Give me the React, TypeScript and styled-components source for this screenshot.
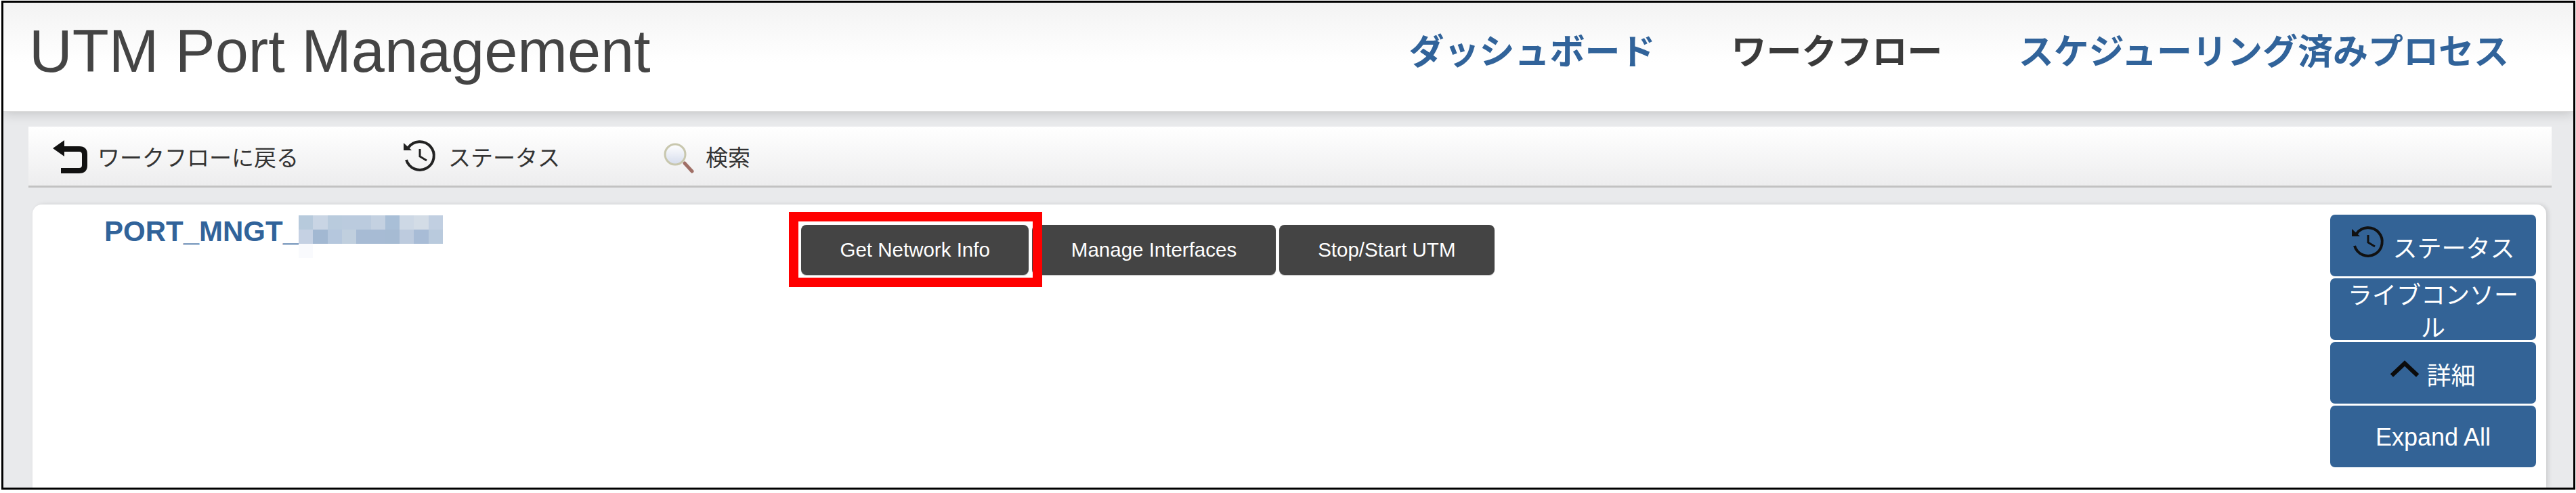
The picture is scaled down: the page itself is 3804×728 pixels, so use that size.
import styled, { createGlobalStyle } from "styled-components";

const FONT = `"Liberation Sans", "Noto Sans CJK JP", sans-serif`;
const BLUE = "#31639a";

const mosaicRows = [
    ["#b7cadc", "#c9d5e4", "#b9cbdd", "#bbcbde", "#bbcbde", "#c4d1e1", "#a9bfd7", "#cdd8e5", "#d3dce6", "#c1cfe1"],
    ["#c5d1e3", "#a2b8d2", "#b5c7dd", "#c0cfde", "#a7bbd4", "#a7bbd4", "#a6bbd3", "#bdcbde", "#a8bcd6", "#b9cadd"],
    ["#f9fafd"],
];

const GlobalStyle = createGlobalStyle`
    html, body {
        margin: 0;
        padding: 0;
        background: #fff;
        font-family: ${FONT};
    }
`;

const BackIcon = () => (
    <IconSvg viewBox="3 0 52 55" $width={52} $height={55}>
        <path d="M3 16 L20 4 V28 Z" fill="#111" />
        <path d="M16 17 H42 Q50 17 50 25 V41 Q50 49 42 49 H15" fill="none" stroke="#111" strokeWidth="8" />
    </IconSvg>
);

const HistoryIcon = ({ color = "#222" }: { color?: string }) => (
    <IconSvg viewBox="0 0 50 50" $width={50} $height={50}>
        <path d="M1 5 V16 H13 Z" fill={color} />
        <path d="M8 12 A20.8 20.8 0 1 1 5 30" fill="none" stroke={color} strokeWidth="4" />
        <path d="M25 14 V25 L35 31" fill="none" stroke={color} strokeWidth="3" />
    </IconSvg>
);

const SearchIcon = () => (
    <IconSvg viewBox="0 0 50 50" $width={50} $height={50}>
        <defs>
            <linearGradient id="glass" x1="0" y1="0" x2="0" y2="1">
                <stop offset="0" stopColor="#ffffff" />
                <stop offset="1" stopColor="#d5dcec" />
            </linearGradient>
        </defs>
        <path d="M36 35 L47 47" stroke="#a06f66" strokeWidth="5" strokeLinecap="round" />
        <circle cx="22" cy="22" r="15" fill="url(#glass)" stroke="#c8c7ae" strokeWidth="3" />
    </IconSvg>
);

const ChevronIcon = () => (
    <ChevronSvg viewBox="0 0 44 26">
        <path d="M2 23 L22 4 L42 23" fill="none" stroke="#0b0b0b" strokeWidth="6.5" />
    </ChevronSvg>
);

const App = () => {
    return (
        <>
            <GlobalStyle />
            <Frame>
                <Header>
                    <Title>UTM Port Management</Title>
                    <Nav>
                        <NavLink>ダッシュボード</NavLink>
                        <NavLink $active>ワークフロー</NavLink>
                        <NavLink>スケジューリング済みプロセス</NavLink>
                    </Nav>
                </Header>

                <Toolbar>
                    <ToolItem $width={517} $gap={14}>
                        <BackIcon />
                        <span>ワークフローに戻る</span>
                    </ToolItem>
                    <ToolItem $width={380}>
                        <HistoryIcon />
                        <span>ステータス</span>
                    </ToolItem>
                    <ToolItem>
                        <SearchIcon />
                        <span>検索</span>
                    </ToolItem>
                </Toolbar>

                <Panel>
                    <ProcessName>
                        <ProcessText>PORT_MNGT_</ProcessText>
                        <Mosaic>
                            {mosaicRows.flat().map((color, i) => (
                                <MosaicCell key={i} $color={color} />
                            ))}
                        </Mosaic>
                    </ProcessName>

                    <Actions>
                        <Highlighted>
                            <ActionButton>Get Network Info</ActionButton>
                            <RedBox />
                        </Highlighted>
                        <ActionButton>Manage Interfaces</ActionButton>
                        <ActionButton>Stop/Start UTM</ActionButton>
                    </Actions>

                    <SideColumn>
                        <SideButton>
                            <RaisedIcon>
                                <HistoryIcon color="#111" />
                            </RaisedIcon>
                            <LoweredText>ステータス</LoweredText>
                        </SideButton>
                        <SideButton $wrap>ライブコンソール</SideButton>
                        <SideButton>
                            <ChevronIcon />
                            <LoweredText>詳細</LoweredText>
                        </SideButton>
                        <SideButton>
                            <LoweredText $small>Expand All</LoweredText>
                        </SideButton>
                    </SideColumn>
                </Panel>
            </Frame>
        </>
    );
};

const Frame = styled.div`
    box-sizing: border-box;
    width: 3801px;
    height: 722px;
    margin: 1px 1px 5px 2px;
    border: 3px solid #000;
    background: #e9eaec;
    display: flex;
    flex-direction: column;
    overflow: hidden;
`;

const Header = styled.header`
    position: relative;
    z-index: 1;
    box-sizing: border-box;
    flex: 0 0 161px;
    display: flex;
    justify-content: space-between;
    align-items: flex-start;
    padding: 22px 95px 0 38px;
    background: linear-gradient(to bottom, #f3f3f3, #ffffff 55%);
    border-bottom: 1px solid #dcdcdc;
    box-shadow: 0 3px 16px rgba(0, 0, 0, 0.16);
`;

const Title = styled.h1`
    margin: 0;
    font-size: 88.3px;
    line-height: 100px;
    font-weight: 400;
    color: #444;
`;

const Nav = styled.nav`
    display: flex;
    gap: 112px;
    padding-top: 16px;
`;

const NavLink = styled.a<{ $active?: boolean }>`
    font-size: 52px;
    line-height: 70px;
    font-weight: 700;
    color: ${({ $active }) => ($active ? "#3a3a3a" : BLUE)};
`;

const Toolbar = styled.div`
    box-sizing: border-box;
    flex: 0 0 90px;
    display: flex;
    align-items: center;
    margin: 22px 32px 0 37px;
    padding-left: 36px;
    background: linear-gradient(to bottom, #ffffff, #ededee);
    border-bottom: 3px solid #c2c2c2;
`;

const ToolItem = styled.div<{ $width?: number; $gap?: number }>`
    display: flex;
    align-items: center;
    gap: ${({ $gap }) => $gap ?? 17}px;
    width: ${({ $width }) => ($width ? `${$width}px` : "auto")};
    font-size: 33px;
    color: #333;
`;

const IconSvg = styled.svg<{ $width: number; $height: number }>`
    display: block;
    flex: none;
    width: ${({ $width }) => $width}px;
    height: ${({ $height }) => $height}px;
`;

const ChevronSvg = styled.svg`
    display: block;
    flex: none;
    width: 42px;
    height: 26px;
    margin-bottom: 12px;
`;

const Panel = styled.section`
    flex: 1;
    display: flex;
    align-items: flex-start;
    margin: 25px 40px 0 43px;
    background: #fff;
    border-radius: 14px 14px 0 0;
    box-shadow: 3px 0 6px rgba(0, 0, 0, 0.12);
`;

const ProcessName = styled.div`
    box-sizing: border-box;
    flex: 0 0 1135px;
    display: flex;
    align-items: flex-start;
    padding: 16px 0 0 106px;
`;

const ProcessText = styled.span`
    font-size: 42px;
    line-height: 48px;
    font-weight: 700;
    color: ${BLUE};
`;

const Mosaic = styled.div`
    display: grid;
    grid-template-columns: repeat(10, 21.3px);
    grid-auto-rows: 21px;
`;

const MosaicCell = styled.div<{ $color: string }>`
    background: ${({ $color }) => $color};
`;

const Actions = styled.div`
    display: flex;
    gap: 5px;
    margin-top: 30px;
`;

const Highlighted = styled.div`
    position: relative;
    display: flex;
`;

const RedBox = styled.div`
    position: absolute;
    z-index: 1;
    top: -19px;
    right: -20px;
    bottom: -18px;
    left: -18px;
    border: 14px solid #ff0000;
`;

const ActionButton = styled.button`
    box-sizing: border-box;
    height: 74px;
    padding: 0 57.5px;
    border: 0;
    border-radius: 8px;
    background: #444;
    color: #fff;
    font-family: ${FONT};
    font-size: 29.5px;
    box-shadow: 0 1px 1px rgba(0, 0, 0, 0.25);
`;

const SideColumn = styled.div`
    display: flex;
    flex-direction: column;
    gap: 3px;
    margin: 15px 15px 0 auto;
`;

const SideButton = styled.button<{ $wrap?: boolean }>`
    box-sizing: border-box;
    width: 304px;
    height: 91px;
    padding: ${({ $wrap }) => ($wrap ? "2px" : "0")} 24px 0;
    display: flex;
    align-items: ${({ $wrap }) => ($wrap ? "flex-start" : "center")};
    justify-content: center;
    gap: 11px;
    border: 0;
    border-radius: 7px;
    background: #336396;
    color: #fff;
    font-family: ${FONT};
    font-size: 36px;
    line-height: ${({ $wrap }) => ($wrap ? 48 : 50)}px;
`;

const RaisedIcon = styled.span`
    display: block;
    margin-bottom: 10px;
`;

const LoweredText = styled.span<{ $small?: boolean }>`
    padding-top: ${({ $small }) => ($small ? 2 : 10)}px;
`;

export default App;
